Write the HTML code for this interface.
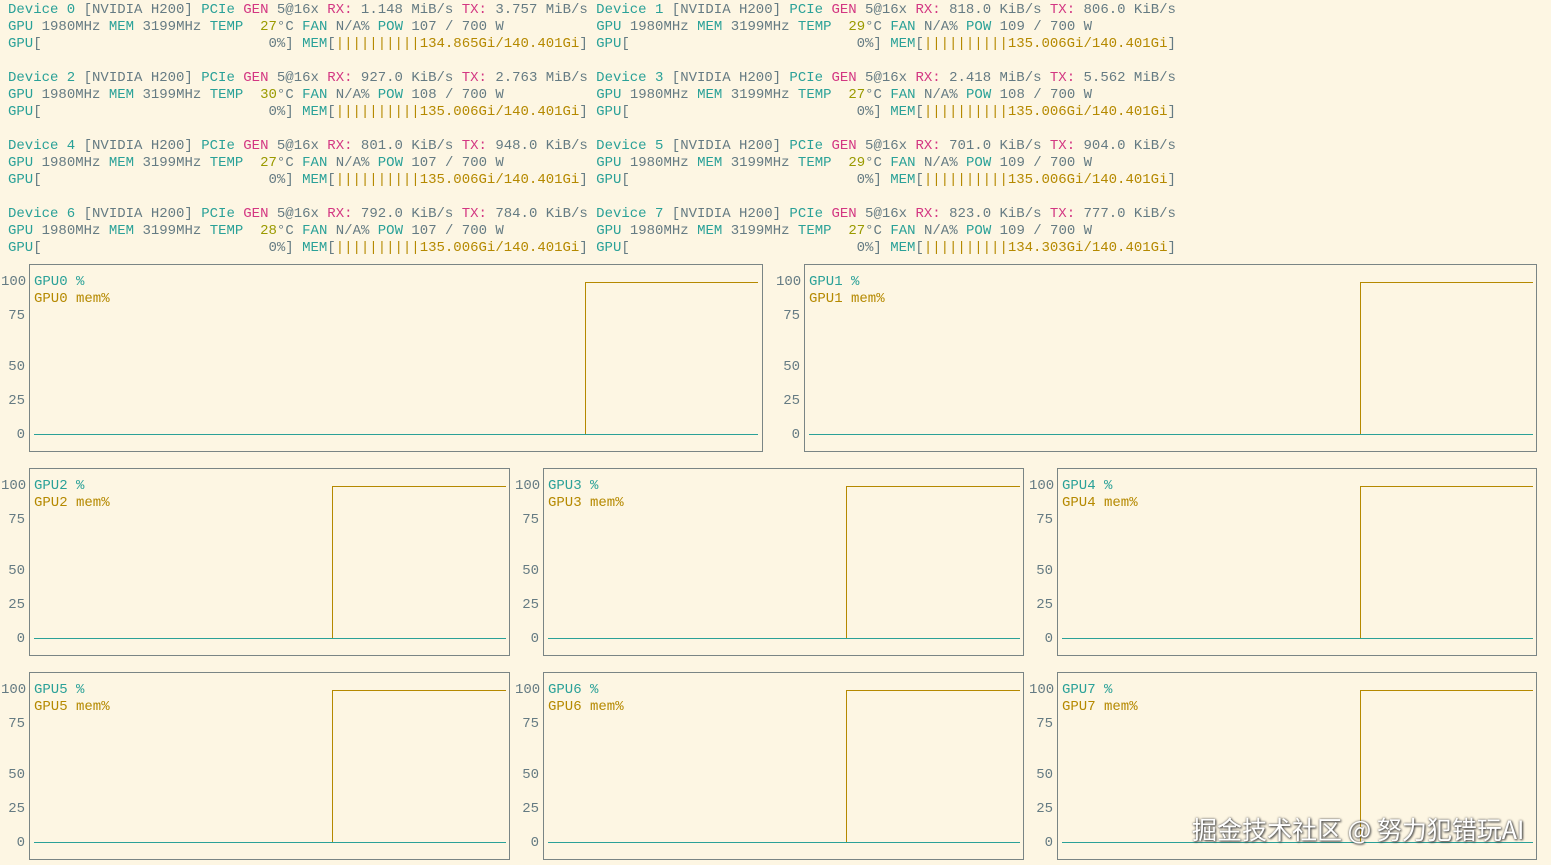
<!DOCTYPE html>
<html><head><meta charset="utf-8"><style>
html,body{margin:0;padding:0;background:#fdf6e3;width:1551px;height:865px;overflow:hidden}
body{position:relative;font-family:"Liberation Mono","DejaVu Sans Mono",monospace;font-size:14px;color:#657b83}
pre{margin:0;font:inherit;position:absolute;left:8px;line-height:17px;white-space:pre}
.t{color:#2aa198}.m{color:#d33682}.y{color:#b58900}.o{color:#9a9a00}
.l{position:absolute;line-height:17px;white-space:pre}
.yl{position:absolute;width:24px;text-align:right;line-height:17px}
.wm{position:absolute;left:1192px;top:811px;font-family:"Noto Sans CJK SC",sans-serif;font-size:25px;color:#fff;text-shadow:0 0 2px #555,1px 1px 2px #333;white-space:nowrap}
</style></head><body>
<pre style="top:2px"><span class="t">Device 0</span> [NVIDIA H200] <span class="t">PCIe</span> <span class="m">GEN</span> 5@16x <span class="m">RX:</span> 1.148 MiB/s <span class="m">TX:</span> 3.757 MiB/s <span class="t">Device 1</span> [NVIDIA H200] <span class="t">PCIe</span> <span class="m">GEN</span> 5@16x <span class="m">RX:</span> 818.0 KiB/s <span class="m">TX:</span> 806.0 KiB/s
<span class="t">GPU</span> 1980MHz <span class="t">MEM</span> 3199MHz <span class="t">TEMP</span>  <span class="o">27</span>°C <span class="t">FAN</span> N/A% <span class="t">POW</span> 107 / 700 W           <span class="t">GPU</span> 1980MHz <span class="t">MEM</span> 3199MHz <span class="t">TEMP</span>  <span class="o">29</span>°C <span class="t">FAN</span> N/A% <span class="t">POW</span> 109 / 700 W
<span class="t">GPU</span>[                           0%] <span class="t">MEM</span>[<span class="y">||||||||||134.865Gi/140.401Gi</span>] <span class="t">GPU</span>[                           0%] <span class="t">MEM</span>[<span class="y">||||||||||135.006Gi/140.401Gi</span>]</pre>
<pre style="top:70px"><span class="t">Device 2</span> [NVIDIA H200] <span class="t">PCIe</span> <span class="m">GEN</span> 5@16x <span class="m">RX:</span> 927.0 KiB/s <span class="m">TX:</span> 2.763 MiB/s <span class="t">Device 3</span> [NVIDIA H200] <span class="t">PCIe</span> <span class="m">GEN</span> 5@16x <span class="m">RX:</span> 2.418 MiB/s <span class="m">TX:</span> 5.562 MiB/s
<span class="t">GPU</span> 1980MHz <span class="t">MEM</span> 3199MHz <span class="t">TEMP</span>  <span class="o">30</span>°C <span class="t">FAN</span> N/A% <span class="t">POW</span> 108 / 700 W           <span class="t">GPU</span> 1980MHz <span class="t">MEM</span> 3199MHz <span class="t">TEMP</span>  <span class="o">27</span>°C <span class="t">FAN</span> N/A% <span class="t">POW</span> 108 / 700 W
<span class="t">GPU</span>[                           0%] <span class="t">MEM</span>[<span class="y">||||||||||135.006Gi/140.401Gi</span>] <span class="t">GPU</span>[                           0%] <span class="t">MEM</span>[<span class="y">||||||||||135.006Gi/140.401Gi</span>]</pre>
<pre style="top:138px"><span class="t">Device 4</span> [NVIDIA H200] <span class="t">PCIe</span> <span class="m">GEN</span> 5@16x <span class="m">RX:</span> 801.0 KiB/s <span class="m">TX:</span> 948.0 KiB/s <span class="t">Device 5</span> [NVIDIA H200] <span class="t">PCIe</span> <span class="m">GEN</span> 5@16x <span class="m">RX:</span> 701.0 KiB/s <span class="m">TX:</span> 904.0 KiB/s
<span class="t">GPU</span> 1980MHz <span class="t">MEM</span> 3199MHz <span class="t">TEMP</span>  <span class="o">27</span>°C <span class="t">FAN</span> N/A% <span class="t">POW</span> 107 / 700 W           <span class="t">GPU</span> 1980MHz <span class="t">MEM</span> 3199MHz <span class="t">TEMP</span>  <span class="o">29</span>°C <span class="t">FAN</span> N/A% <span class="t">POW</span> 109 / 700 W
<span class="t">GPU</span>[                           0%] <span class="t">MEM</span>[<span class="y">||||||||||135.006Gi/140.401Gi</span>] <span class="t">GPU</span>[                           0%] <span class="t">MEM</span>[<span class="y">||||||||||135.006Gi/140.401Gi</span>]</pre>
<pre style="top:206px"><span class="t">Device 6</span> [NVIDIA H200] <span class="t">PCIe</span> <span class="m">GEN</span> 5@16x <span class="m">RX:</span> 792.0 KiB/s <span class="m">TX:</span> 784.0 KiB/s <span class="t">Device 7</span> [NVIDIA H200] <span class="t">PCIe</span> <span class="m">GEN</span> 5@16x <span class="m">RX:</span> 823.0 KiB/s <span class="m">TX:</span> 777.0 KiB/s
<span class="t">GPU</span> 1980MHz <span class="t">MEM</span> 3199MHz <span class="t">TEMP</span>  <span class="o">28</span>°C <span class="t">FAN</span> N/A% <span class="t">POW</span> 107 / 700 W           <span class="t">GPU</span> 1980MHz <span class="t">MEM</span> 3199MHz <span class="t">TEMP</span>  <span class="o">27</span>°C <span class="t">FAN</span> N/A% <span class="t">POW</span> 109 / 700 W
<span class="t">GPU</span>[                           0%] <span class="t">MEM</span>[<span class="y">||||||||||135.006Gi/140.401Gi</span>] <span class="t">GPU</span>[                           0%] <span class="t">MEM</span>[<span class="y">||||||||||134.303Gi/140.401Gi</span>]</pre>

<svg width="1551" height="865" style="position:absolute;left:0;top:0" fill="none" stroke-width="1">
<g stroke="#7a8585">
<rect x="29.5" y="264.5" width="733" height="187"/>
<rect x="804.5" y="264.5" width="732" height="187"/>
<rect x="29.5" y="468.5" width="480" height="187"/>
<rect x="543.5" y="468.5" width="480" height="187"/>
<rect x="1057.5" y="468.5" width="479" height="187"/>
<rect x="29.5" y="672.5" width="480" height="187"/>
<rect x="543.5" y="672.5" width="480" height="187"/>
<rect x="1057.5" y="672.5" width="479" height="187"/>
</g>
<g stroke="#2aa198">
<path d="M34 434.5H758M809 434.5H1533M34 638.5H506M548 638.5H1020M1062 638.5H1533M34 842.5H506M548 842.5H1020M1062 842.5H1533"/>
</g>
<g stroke="#b58900">
<path d="M585.5 434V282.5H758M1360.5 434V282.5H1533M332.5 638V486.5H506M846.5 638V486.5H1020M1360.5 638V486.5H1533M332.5 842V690.5H506M846.5 842V690.5H1020M1360.5 842V690.5H1533"/>
</g>
</svg>

<div class="l" style="left:34px;top:274px"><span class="t">GPU0 %</span>
<span class="y">GPU0 mem%</span></div>
<div class="l" style="left:809px;top:274px"><span class="t">GPU1 %</span>
<span class="y">GPU1 mem%</span></div>
<div class="l" style="left:34px;top:478px"><span class="t">GPU2 %</span>
<span class="y">GPU2 mem%</span></div>
<div class="l" style="left:548px;top:478px"><span class="t">GPU3 %</span>
<span class="y">GPU3 mem%</span></div>
<div class="l" style="left:1062px;top:478px"><span class="t">GPU4 %</span>
<span class="y">GPU4 mem%</span></div>
<div class="l" style="left:34px;top:682px"><span class="t">GPU5 %</span>
<span class="y">GPU5 mem%</span></div>
<div class="l" style="left:548px;top:682px"><span class="t">GPU6 %</span>
<span class="y">GPU6 mem%</span></div>
<div class="l" style="left:1062px;top:682px"><span class="t">GPU7 %</span>
<span class="y">GPU7 mem%</span></div>

<div class="yl" style="left:1px;top:274px">100</div><div class="yl" style="left:1px;top:308px">75</div><div class="yl" style="left:1px;top:359px">50</div><div class="yl" style="left:1px;top:393px">25</div><div class="yl" style="left:1px;top:427px">0</div>
<div class="yl" style="left:776px;top:274px">100</div><div class="yl" style="left:776px;top:308px">75</div><div class="yl" style="left:776px;top:359px">50</div><div class="yl" style="left:776px;top:393px">25</div><div class="yl" style="left:776px;top:427px">0</div>
<div class="yl" style="left:1px;top:478px">100</div><div class="yl" style="left:1px;top:512px">75</div><div class="yl" style="left:1px;top:563px">50</div><div class="yl" style="left:1px;top:597px">25</div><div class="yl" style="left:1px;top:631px">0</div>
<div class="yl" style="left:515px;top:478px">100</div><div class="yl" style="left:515px;top:512px">75</div><div class="yl" style="left:515px;top:563px">50</div><div class="yl" style="left:515px;top:597px">25</div><div class="yl" style="left:515px;top:631px">0</div>
<div class="yl" style="left:1029px;top:478px">100</div><div class="yl" style="left:1029px;top:512px">75</div><div class="yl" style="left:1029px;top:563px">50</div><div class="yl" style="left:1029px;top:597px">25</div><div class="yl" style="left:1029px;top:631px">0</div>
<div class="yl" style="left:1px;top:682px">100</div><div class="yl" style="left:1px;top:716px">75</div><div class="yl" style="left:1px;top:767px">50</div><div class="yl" style="left:1px;top:801px">25</div><div class="yl" style="left:1px;top:835px">0</div>
<div class="yl" style="left:515px;top:682px">100</div><div class="yl" style="left:515px;top:716px">75</div><div class="yl" style="left:515px;top:767px">50</div><div class="yl" style="left:515px;top:801px">25</div><div class="yl" style="left:515px;top:835px">0</div>
<div class="yl" style="left:1029px;top:682px">100</div><div class="yl" style="left:1029px;top:716px">75</div><div class="yl" style="left:1029px;top:767px">50</div><div class="yl" style="left:1029px;top:801px">25</div><div class="yl" style="left:1029px;top:835px">0</div>

<div class="wm">掘金技术社区 @ 努力犯错玩AI</div>
</body></html>
